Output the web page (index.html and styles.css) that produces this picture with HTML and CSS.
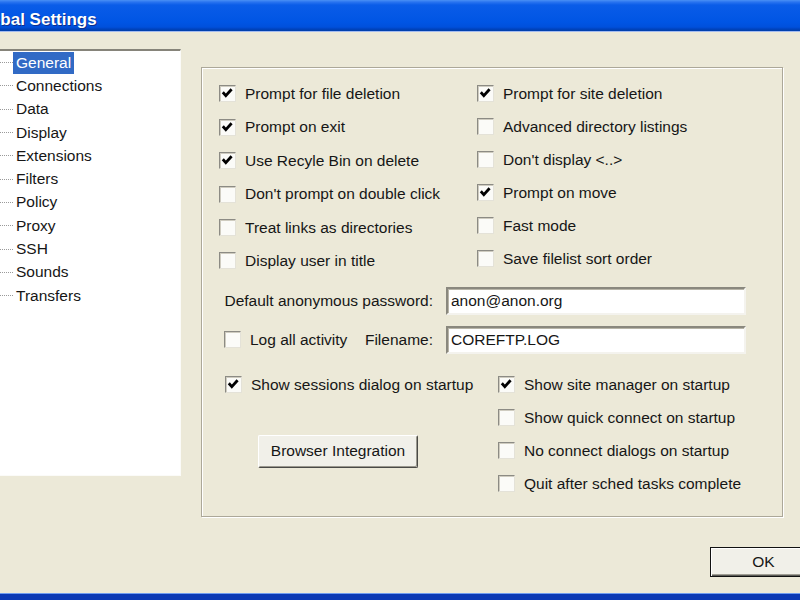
FILE: index.html
```html
<!DOCTYPE html>
<html>
<head>
<meta charset="utf-8">
<title>Global Settings</title>
<link rel="stylesheet" href="styles.css">
</head>
<body>
<div class="window">
  <div class="titlebar"><span class="title">Global Settings</span></div>
  <div class="client">
    <div class="main">
      <ul class="tree">
        <li class="item"><span class="dots"></span><span class="label selected">General</span></li>
        <li class="item"><span class="dots"></span><span class="label">Connections</span></li>
        <li class="item"><span class="dots"></span><span class="label">Data</span></li>
        <li class="item"><span class="dots"></span><span class="label">Display</span></li>
        <li class="item"><span class="dots"></span><span class="label">Extensions</span></li>
        <li class="item"><span class="dots"></span><span class="label">Filters</span></li>
        <li class="item"><span class="dots"></span><span class="label">Policy</span></li>
        <li class="item"><span class="dots"></span><span class="label">Proxy</span></li>
        <li class="item"><span class="dots"></span><span class="label">SSH</span></li>
        <li class="item"><span class="dots"></span><span class="label">Sounds</span></li>
        <li class="item"><span class="dots"></span><span class="label">Transfers</span></li>
      </ul>
      <div class="group">
        <div class="opts">
          <div class="col col-left">
            <div class="cb"><span class="box"><svg viewBox="0 0 15 15"><polyline points="2.8,6.3 5.8,9.6 11.6,3.2"/></svg></span>Prompt for file deletion</div>
            <div class="cb"><span class="box"><svg viewBox="0 0 15 15"><polyline points="2.8,6.3 5.8,9.6 11.6,3.2"/></svg></span>Prompt on exit</div>
            <div class="cb"><span class="box"><svg viewBox="0 0 15 15"><polyline points="2.8,6.3 5.8,9.6 11.6,3.2"/></svg></span>Use Recyle Bin on delete</div>
            <div class="cb"><span class="box"></span>Don't prompt on double click</div>
            <div class="cb"><span class="box"></span>Treat links as directories</div>
            <div class="cb"><span class="box"></span>Display user in title</div>
          </div>
          <div class="col col-right">
            <div class="cb"><span class="box"><svg viewBox="0 0 15 15"><polyline points="2.8,6.3 5.8,9.6 11.6,3.2"/></svg></span>Prompt for site deletion</div>
            <div class="cb"><span class="box"></span>Advanced directory listings</div>
            <div class="cb"><span class="box"></span>Don't display &lt;..&gt;</div>
            <div class="cb"><span class="box"><svg viewBox="0 0 15 15"><polyline points="2.8,6.3 5.8,9.6 11.6,3.2"/></svg></span>Prompt on move</div>
            <div class="cb"><span class="box"></span>Fast mode</div>
            <div class="cb"><span class="box"></span>Save filelist sort order</div>
          </div>
        </div>
        <div class="fields">
          <div class="flabel">Default anonymous password:</div>
          <input class="text" type="text" value="anon@anon.org">
          <div class="logcell"><div class="cb"><span class="box"></span>Log all activity</div><span class="fname">Filename:</span></div>
          <input class="text" type="text" value="COREFTP.LOG">
        </div>
        <div class="startup">
          <div class="scol-left">
            <div class="cb"><span class="box"><svg viewBox="0 0 15 15"><polyline points="2.8,6.3 5.8,9.6 11.6,3.2"/></svg></span>Show sessions dialog on startup</div>
            <button class="btn btn-browser" type="button">Browser Integration</button>
          </div>
          <div class="scol-right">
            <div class="cb"><span class="box"><svg viewBox="0 0 15 15"><polyline points="2.8,6.3 5.8,9.6 11.6,3.2"/></svg></span>Show site manager on startup</div>
            <div class="cb"><span class="box"></span>Show quick connect on startup</div>
            <div class="cb"><span class="box"></span>No connect dialogs on startup</div>
            <div class="cb"><span class="box"></span>Quit after sched tasks complete</div>
          </div>
        </div>
      </div>
    </div>
    <div class="footer"><button class="btn btn-ok" type="button">OK</button></div>
  </div>
  <div class="frame-bottom"></div>
</div>
</body>
</html>
```
FILE: styles.css
```css
html, body {
  margin: 0;
  padding: 0;
}
body {
  font-family: "Liberation Sans", Arial, sans-serif;
  font-size: 15.5px;
  color: #161616;
}
.window {
  width: 800px;
  height: 600px;
  display: flex;
  flex-direction: column;
  overflow: hidden;
}
.titlebar {
  height: 32px;
  box-sizing: border-box;
  flex: none;
  background: linear-gradient(to bottom, #4a90f5 0px, #2a74f0 2px, #0a5ce8 5px, #0055e4 22px, #0050dc 27px, #0043bf 29px, #003ea8 31px);
  border-bottom: 1px solid #a3bbef;
  overflow: hidden;
  white-space: nowrap;
}
.title {
  display: inline-block;
  margin-left: -28px;
  padding-top: 10px;
  line-height: 20px;
  font-size: 17px;
  font-weight: bold;
  color: #fff;
  text-shadow: 1px 1px 0 #0b2e8c;
}
.client {
  flex: 1;
  background: #ece9d8;
  overflow: hidden;
}
.main {
  display: flex;
  align-items: flex-start;
  height: 485px;
}
.tree {
  list-style: none;
  margin: 17px 0 0 0;
  padding: 0;
  width: 181px;
  height: 427px;
  box-sizing: border-box;
  background: #fff;
  border-top: 2px solid #86847a;
  border-right: 1px solid #fbfbf8;
  border-bottom: 1px solid #fbfbf8;
  flex: none;
}
.item {
  display: flex;
  align-items: center;
  height: 23.3px;
}
.dots {
  width: 13px;
  height: 0;
  border-top: 1px dotted #9a9a9a;
  flex: none;
}
.label {
  padding: 0 3px;
  line-height: 22px;
  white-space: nowrap;
}
.label.selected {
  background: #316ac5;
  color: #fff;
}
.group {
  margin: 35px 0 0 20px;
  width: 582px;
  height: 450px;
  box-sizing: border-box;
  border: 1px solid #aca899;
  box-shadow: inset 1px 1px 0 #fff, 1px 1px 0 #fff;
  padding-top: 9.3px;
  flex: none;
  display: flex;
  flex-direction: column;
}
.opts {
  display: flex;
  padding-left: 17px;
}
.col-left {
  width: 258px;
}
.col-left .cb {
  height: 33.4px;
}
.cb {
  display: flex;
  align-items: center;
  height: 33px;
  white-space: nowrap;
}
.box {
  width: 17px;
  height: 17px;
  box-sizing: border-box;
  flex: none;
  margin-right: 9px;
  background: #fbfbf8;
  border: 1px solid;
  border-color: #8c8b84 #e4e2d8 #e4e2d8 #8c8b84;
  box-shadow: inset 1px 1px 0 #cfccc0;
  display: flex;
}
.box svg {
  width: 15px;
  height: 15px;
}
.box polyline {
  fill: none;
  stroke: #000;
  stroke-width: 2.8;
}
.fields {
  display: grid;
  grid-template-columns: 231px 300px;
  grid-auto-rows: 28px;
  column-gap: 13px;
  row-gap: 11px;
  margin-top: 9.3px;
  align-items: center;
}
.flabel {
  text-align: right;
  white-space: nowrap;
}
.logcell {
  display: flex;
  align-items: center;
  padding-left: 22px;
}
.logcell .cb {
  height: 28px;
}
.fname {
  margin-left: auto;
}
.text {
  width: 300px;
  height: 28px;
  box-sizing: border-box;
  margin: 0;
  padding: 0 3px;
  font: inherit;
  color: #161616;
  background: #fff;
  border: 2px solid;
  border-color: #8a887e #f4f3ee #f4f3ee #8a887e;
  box-shadow: inset 1px 1px 0 #b8b5a8;
  outline: none;
}
.startup {
  display: flex;
  padding-left: 23px;
  margin-top: 14.5px;
}
.scol-left {
  width: 273px;
  display: flex;
  flex-direction: column;
  align-items: flex-start;
}
.btn {
  font: inherit;
  color: #161616;
  background: #f1f0e9;
  border: 1px solid;
  border-color: #fff #4a4a46 #4a4a46 #fff;
  box-shadow: inset -1px -1px 0 #9a988e;
  border-radius: 2px;
  padding: 0;
  margin: 0;
}
.btn-browser {
  margin-top: 33.5px;
  margin-left: 33px;
  width: 160px;
  height: 33px;
}
.footer {
  padding-left: 710px;
  margin-top: 30px;
  display: flex;
}
.btn-ok {
  width: 107px;
  height: 30px;
  flex: none;
  border: 1px solid #111;
  border-radius: 0;
  box-shadow: inset 1px 1px 0 #fff, inset -1px -1px 0 #5a5a56, inset -2px -2px 0 #a09e94;
}
.frame-bottom {
  height: 7px;
  flex: none;
  box-sizing: border-box;
  border-top: 1px solid #6f9cf0;
  background: #0b39b4;
}
```
